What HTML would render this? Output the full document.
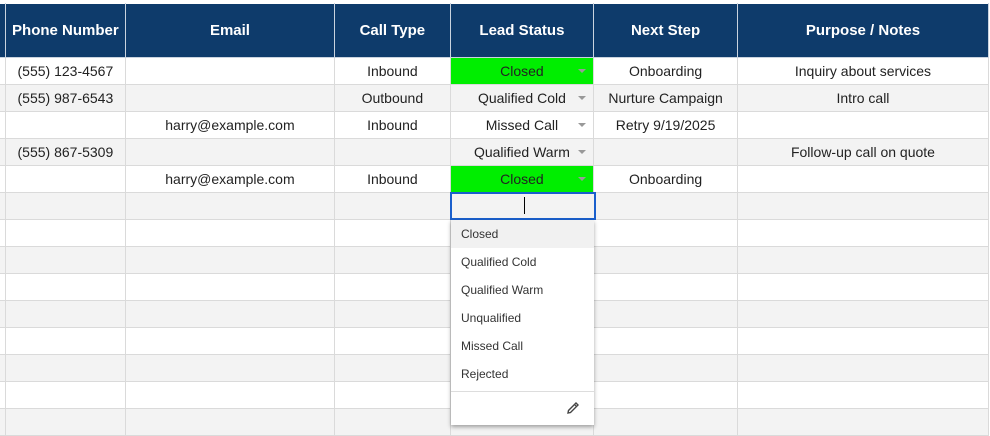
<!DOCTYPE html>
<html><head><style>
body{margin:0;width:990px;height:432px;overflow:hidden;background:#fff;font-family:"Liberation Sans",Arial,sans-serif;position:relative}
table{position:absolute;left:-1px;top:3px;border-collapse:collapse;table-layout:fixed}
td,th{border:1px solid #dadada;padding:0;text-align:center;font-size:14px;color:#222;white-space:nowrap;overflow:hidden;position:relative}
th{background:#0e3b6b;color:#fff;font-weight:bold;font-size:15px;height:53px;border-color:#c9d3df;border-top:1px solid #fff}
td{height:26px}
tr:nth-child(odd) td{background:#f3f3f3}
tr:nth-child(even) td{background:#fff}
td.g{background:#00ee00!important}
.ar{position:absolute;right:7px;top:11px;width:0;height:0;border-left:4px solid transparent;border-right:4px solid transparent;border-top:4px solid #999}
.dd{position:absolute;left:451px;top:220px;width:143px;height:205px;background:#fff;box-shadow:0 2px 4px rgba(0,0,0,.35);font-size:12px;color:#333}
.dd div.i{height:28px;line-height:28px;padding-left:10px}
.sel{position:absolute;left:450px;top:192px;width:142px;height:24px;border:2px solid #1a5fcc;background:#f3f3f3}
</style></head><body>
<table>
<colgroup><col style="width:6px"><col style="width:120px"><col style="width:210px"><col style="width:116px"><col style="width:144px"><col style="width:144px"><col style="width:252px"></colgroup>
<tr><th></th><th>Phone Number</th><th>Email</th><th>Call Type</th><th>Lead Status</th><th>Next Step</th><th>Purpose / Notes</th></tr>
<tr><td></td><td>(555) 123-4567</td><td></td><td>Inbound</td><td class="g">Closed<span class="ar"></span></td><td>Onboarding</td><td>Inquiry about services</td></tr>
<tr><td></td><td>(555) 987-6543</td><td></td><td>Outbound</td><td>Qualified Cold<span class="ar"></span></td><td>Nurture Campaign</td><td>Intro call</td></tr>
<tr><td></td><td></td><td>harry@example.com</td><td>Inbound</td><td>Missed Call<span class="ar"></span></td><td>Retry 9/19/2025</td><td></td></tr>
<tr><td></td><td>(555) 867-5309</td><td></td><td></td><td>Qualified Warm<span class="ar"></span></td><td></td><td>Follow-up call on quote</td></tr>
<tr><td></td><td></td><td>harry@example.com</td><td>Inbound</td><td class="g">Closed<span class="ar"></span></td><td>Onboarding</td><td></td></tr>
<tr><td></td><td></td><td></td><td></td><td></td><td></td><td></td></tr>
<tr><td></td><td></td><td></td><td></td><td></td><td></td><td></td></tr>
<tr><td></td><td></td><td></td><td></td><td></td><td></td><td></td></tr>
<tr><td></td><td></td><td></td><td></td><td></td><td></td><td></td></tr>
<tr><td></td><td></td><td></td><td></td><td></td><td></td><td></td></tr>
<tr><td></td><td></td><td></td><td></td><td></td><td></td><td></td></tr>
<tr><td></td><td></td><td></td><td></td><td></td><td></td><td></td></tr>
<tr><td></td><td></td><td></td><td></td><td></td><td></td><td></td></tr>
<tr><td></td><td></td><td></td><td></td><td></td><td></td><td></td></tr>
</table>
<div class="sel"><div style="position:absolute;left:72px;top:3px;width:1px;height:17px;background:#000"></div></div>
<div class="dd">
<div class="i" style="background:#f1f1f1">Closed</div>
<div class="i">Qualified Cold</div>
<div class="i">Qualified Warm</div>
<div class="i">Unqualified</div>
<div class="i">Missed Call</div>
<div class="i">Rejected</div>
<div style="border-top:1px solid #ddd;margin-top:3px;height:30px;position:relative">
<svg style="position:absolute;right:14px;top:9px" width="14" height="14" viewBox="0 0 14 14"><path d="M2 12 L2.5 9.5 L10 2 L12 4 L4.5 11.5 Z" fill="none" stroke="#444" stroke-width="1.4"/><path d="M8.5 3.5 L10.5 5.5" stroke="#444" stroke-width="1.2"/></svg>
</div>
</div>
</body></html>
